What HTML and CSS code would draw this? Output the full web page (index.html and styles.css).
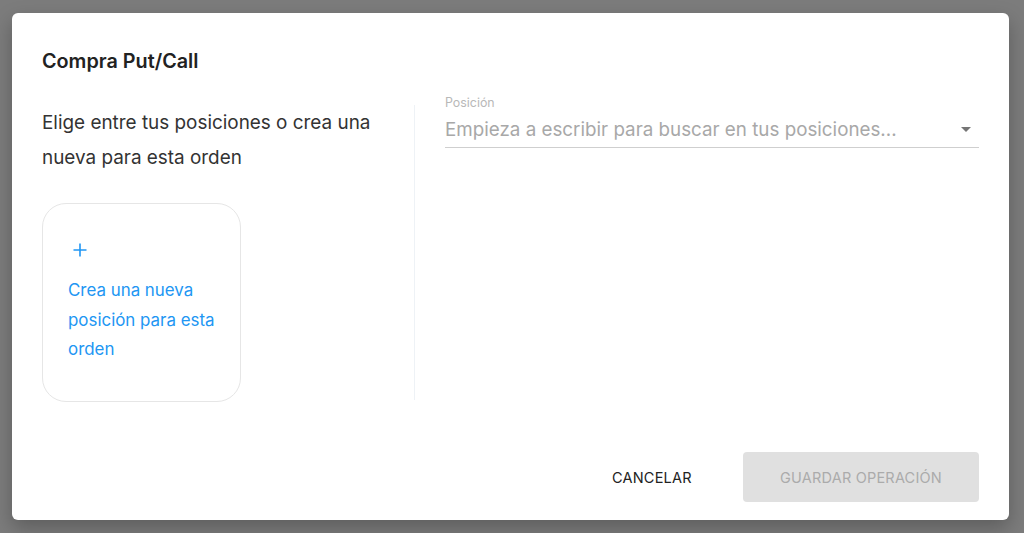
FILE: index.html
```html
<!DOCTYPE html>
<html lang="es">
<head>
<meta charset="utf-8">
<title>Compra Put/Call</title>
<link rel="stylesheet" href="styles.css">
</head>
<body>
<div class="dialog">
  <h2 class="title">Compra Put/Call</h2>
  <div class="content">
    <div class="left">
      <p class="intro">Elige entre tus posiciones o crea una nueva para esta orden</p>
      <div class="card">
        <svg class="plus" width="14" height="14" viewBox="0 0 14 14"><path d="M7 0.5V13.5M0.5 7H13.5" stroke="#2196f3" stroke-width="1.6" fill="none"/></svg>
        <div class="card-text">Crea una nueva posición para esta orden</div>
      </div>
    </div>
    <div class="right">
      <div class="field">
        <label class="label">Posición</label>
        <div class="input">
          <span class="placeholder">Empieza a escribir para buscar en tus posiciones...</span>
          <svg class="arrow" width="10" height="5" viewBox="0 0 10 5"><path d="M0 0H10L5 5Z" fill="#757575"/></svg>
        </div>
      </div>
    </div>
  </div>
  <div class="actions">
    <button class="btn cancel">CANCELAR</button>
    <button class="btn save" disabled>GUARDAR OPERACIÓN</button>
  </div>
</div>
</body>
</html>
```
FILE: styles.css
```css
* { box-sizing: border-box; }
html, body { margin: 0; height: 100%; }
body {
  background: #7c7c7c;
  padding: 13px 15px 13px 12px;
  font-family: Inter, "Noto Sans", sans-serif;
  overflow: hidden;
}
.dialog {
  background: #fff;
  border-radius: 6px;
  height: 507px;
  box-shadow: 0 8px 20px rgba(0,0,0,0.25);
  padding: 36px 30px 0 30px;
  display: flex;
  flex-direction: column;
}
.title {
  margin: 0;
  font-size: 19.8px;
  line-height: 24px;
  font-weight: 600;
  color: #222;
}
.content {
  display: flex;
  margin-top: 22px;
  height: 307px;
}
.left {
  width: 373px;
  padding-right: 28px;
  margin-top: 10px;
  margin-bottom: 2px;
  border-right: 1px solid #eef2f6;
}
.intro {
  margin: 0;
  font-size: 18.9px;
  line-height: 35px;
  color: #333;
}
.card {
  margin-top: 28px;
  width: 199px;
  height: 199px;
  border: 1px solid #e6e6e6;
  border-radius: 24px;
  padding: 39px 16px 0 25px;
  display: flex;
  flex-direction: column;
}
.plus { margin-left: 5px; }
.card-text {
  margin-top: 19px;
  font-size: 16.9px;
  line-height: 29.5px;
  color: #2196f3;
}
.right {
  flex: 1;
  padding-left: 30px;
}
.field { display: flex; flex-direction: column; }
.label {
  font-size: 12.4px;
  line-height: 16px;
  color: #b8b8b8;
}
.input {
  display: flex;
  align-items: center;
  justify-content: space-between;
  height: 37px;
  border-bottom: 1px solid #cfcfcf;
  padding-right: 8px;
}
.placeholder {
  font-size: 18.8px;
  color: #a8a8a8;
}
.actions {
  margin-top: auto;
  margin-bottom: 18px;
  display: flex;
  justify-content: flex-end;
  align-items: center;
  gap: 52px;
}
.btn {
  font-family: Inter, "Noto Sans", sans-serif;
  font-size: 14.5px;
  border: none;
  background: none;
  letter-spacing: 0.2px;
}
.cancel {
  color: #222;
  padding: 0;
  width: 79px;
  height: 50px;
}
.save {
  width: 236px;
  height: 50px;
  background: #e0e0e0;
  color: #ababab;
  border-radius: 4px;
}
```
